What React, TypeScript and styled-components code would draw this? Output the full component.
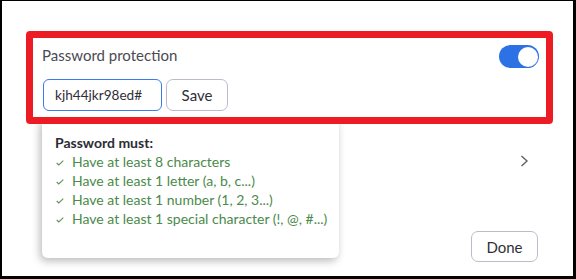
import React from "react";
import styled, { createGlobalStyle } from "styled-components";

const Global = createGlobalStyle`
  html, body { margin: 0; padding: 0; background: #ffffff; }
  * { box-sizing: border-box; }
  body { font-family: Lato, "Noto Sans", "Liberation Sans", sans-serif; }
`;

const Frame = styled.div`
  width: 576px;
  height: 279px;
  border-style: solid;
  border-color: #000;
  border-width: 1px 3px 3px 2px;
  background: #fff;
  display: flex;
  flex-direction: column;
  padding: 30px 20px 14px 24px;
`;

const SettingGroup = styled.div`
  position: relative;
`;

const Highlight = styled.div`
  position: relative;
  z-index: 2;
  background: #fff;
  border: 7px solid #ed1c24;
  border-radius: 4px;
  padding: 7px 7px 6px 9px;
  display: flex;
  flex-direction: column;
  gap: 11px;
`;

const HeaderRow = styled.div`
  display: flex;
  align-items: flex-start;
  justify-content: space-between;
`;

const Label = styled.span`
  font-size: 15px;
  line-height: 20px;
  color: #4a4a52;
`;

const Toggle = styled.div<{ $on: boolean }>`
  width: 40px;
  height: 23px;
  border-radius: 12px;
  background: ${(p) => (p.$on ? "#2d72e4" : "#cfd0d6")};
  position: relative;
  flex-shrink: 0;
`;

const Knob = styled.div`
  position: absolute;
  top: 1.5px;
  right: 1.5px;
  width: 20px;
  height: 20px;
  border-radius: 50%;
  background: #fff;
`;

const InputRow = styled.div`
  display: flex;
  gap: 4px;
  padding-left: 1px;
`;

const PasswordInput = styled.div`
  width: 119px;
  height: 32px;
  border: 1px solid #3a7de8;
  border-radius: 6px;
  padding: 0 0 0 11px;
  display: flex;
  align-items: center;
  font-size: 13.6px;
  color: #2f2f38;
  white-space: nowrap;
`;

const Button = styled.button<{ $w: number; $h: number }>`
  width: ${(p) => p.$w}px;
  height: ${(p) => p.$h}px;
  border: 1px solid #bcbcc8;
  border-radius: 7px;
  background: #fff;
  font-family: Lato, "Noto Sans", "Liberation Sans", sans-serif;
  font-size: 15px;
  color: #2f2f38;
  padding: 0;
  display: flex;
  align-items: center;
  justify-content: center;
`;

const Popover = styled.div`
  position: absolute;
  z-index: 1;
  left: 16px;
  top: 87px;
  width: 297px;
  height: 140px;
  background: #fff;
  border-radius: 6px;
  box-shadow: -2px 3px 9px rgba(0, 0, 0, 0.28);
  padding: 15px 10px 0 13px;
`;

const PopTitle = styled.div`
  font-size: 14px;
  line-height: 19px;
  font-weight: 700;
  color: #2c2c34;
`;

const Rule = styled.div`
  display: flex;
  align-items: center;
  font-size: 14px;
  line-height: 19px;
  color: #4a8a4a;
`;

const Check = styled.svg`
  width: 8px;
  height: 6px;
  margin: 3px 8px 0 1px;
  flex-shrink: 0;
`;

const ListRow = styled.div`
  height: 74px;
  display: flex;
  align-items: center;
  justify-content: flex-end;
  padding-right: 24px;
`;

const Chevron = styled.svg`
  width: 9px;
  height: 12px;
`;

const Footer = styled.div`
  margin-top: auto;
  display: flex;
  justify-content: flex-end;
  padding-right: 15px;
`;

const rules = [
  "Have at least 8 characters",
  "Have at least 1 letter (a, b, c...)",
  "Have at least 1 number (1, 2, 3...)",
  "Have at least 1 special character (!, @, #...)",
];

export default function App() {
  return (
    <>
      <Global />
      <Frame>
        <SettingGroup>
          <Highlight>
            <HeaderRow>
              <Label>Password protection</Label>
              <Toggle $on>
                <Knob />
              </Toggle>
            </HeaderRow>
            <InputRow>
              <PasswordInput>kjh44jkr98ed#</PasswordInput>
              <Button $w={62} $h={32}>Save</Button>
            </InputRow>
          </Highlight>
          <Popover>
            <PopTitle>Password must:</PopTitle>
            {rules.map((r) => (
              <Rule key={r}>
                <Check viewBox="0 0 8 6">
                  <polyline
                    points="0.7,3 2.8,5 7.3,0.7"
                    fill="none"
                    stroke="#5f925f"
                    strokeWidth="1.1"
                  />
                </Check>
                {r}
              </Rule>
            ))}
          </Popover>
        </SettingGroup>
        <ListRow>
          <Chevron viewBox="0 0 9 12">
            <polyline
              points="1.5,1 7,6 1.5,11"
              fill="none"
              stroke="#5f5f69"
              strokeWidth="1.4"
            />
          </Chevron>
        </ListRow>
        <Footer>
          <Button $w={67} $h={31}>Done</Button>
        </Footer>
      </Frame>
    </>
  );
}
